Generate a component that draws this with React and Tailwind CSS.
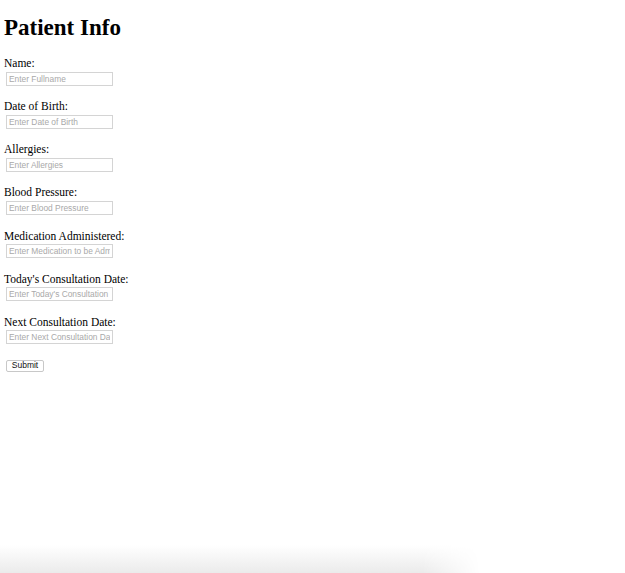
const fields = [
  ["Name:", "Enter Fullname"],
  ["Date of Birth:", "Enter Date of Birth"],
  ["Allergies:", "Enter Allergies"],
  ["Blood Pressure:", "Enter Blood Pressure"],
  ["Medication Administered:", "Enter Medication to be Administered"],
  ["Today's Consultation Date:", "Enter Today's Consultation Date"],
  ["Next Consultation Date:", "Enter Next Consultation Date"],
];

export default function App() {
  return (
    <div className="flex h-[573px] flex-col overflow-hidden bg-white text-black font-['Liberation_Serif',serif]">
      <div className="pl-[4px] pt-[15px]">
        <h1 className="text-[23px] font-bold leading-[1.15]">Patient Info</h1>
        <form className="mt-[16px] flex flex-col" onSubmit={(e) => e.preventDefault()}>
          {fields.map(([label, ph]) => (
            <div key={label} className="mb-[14.8px] flex flex-col">
              <label className="text-[11.5px] leading-[1.15]">{label}</label>
              <input
                type="text"
                placeholder={ph}
                className="ml-[2px] mt-[1px] h-[14px] w-[107px] border border-[#d4d4d4] px-[2px] text-[8.4px] font-['Liberation_Sans',sans-serif] placeholder:text-[#a9a9a9] outline-none"
              />
            </div>
          ))}
          <div className="mt-[1px] flex">
            <button
              type="submit"
              className="ml-[2px] flex h-[12px] w-[38px] items-center justify-center rounded-[2px] border border-[#c8c8c8] bg-white text-[8.5px] leading-none font-['Liberation_Sans',sans-serif] text-[#111]"
            >
              Submit
            </button>
          </div>
        </form>
      </div>
      <div className="mt-auto h-[28px] w-[480px] bg-gradient-to-b from-white to-[#ebebeb] [mask-image:linear-gradient(to_right,black_88%,transparent)]" />
    </div>
  );
}
